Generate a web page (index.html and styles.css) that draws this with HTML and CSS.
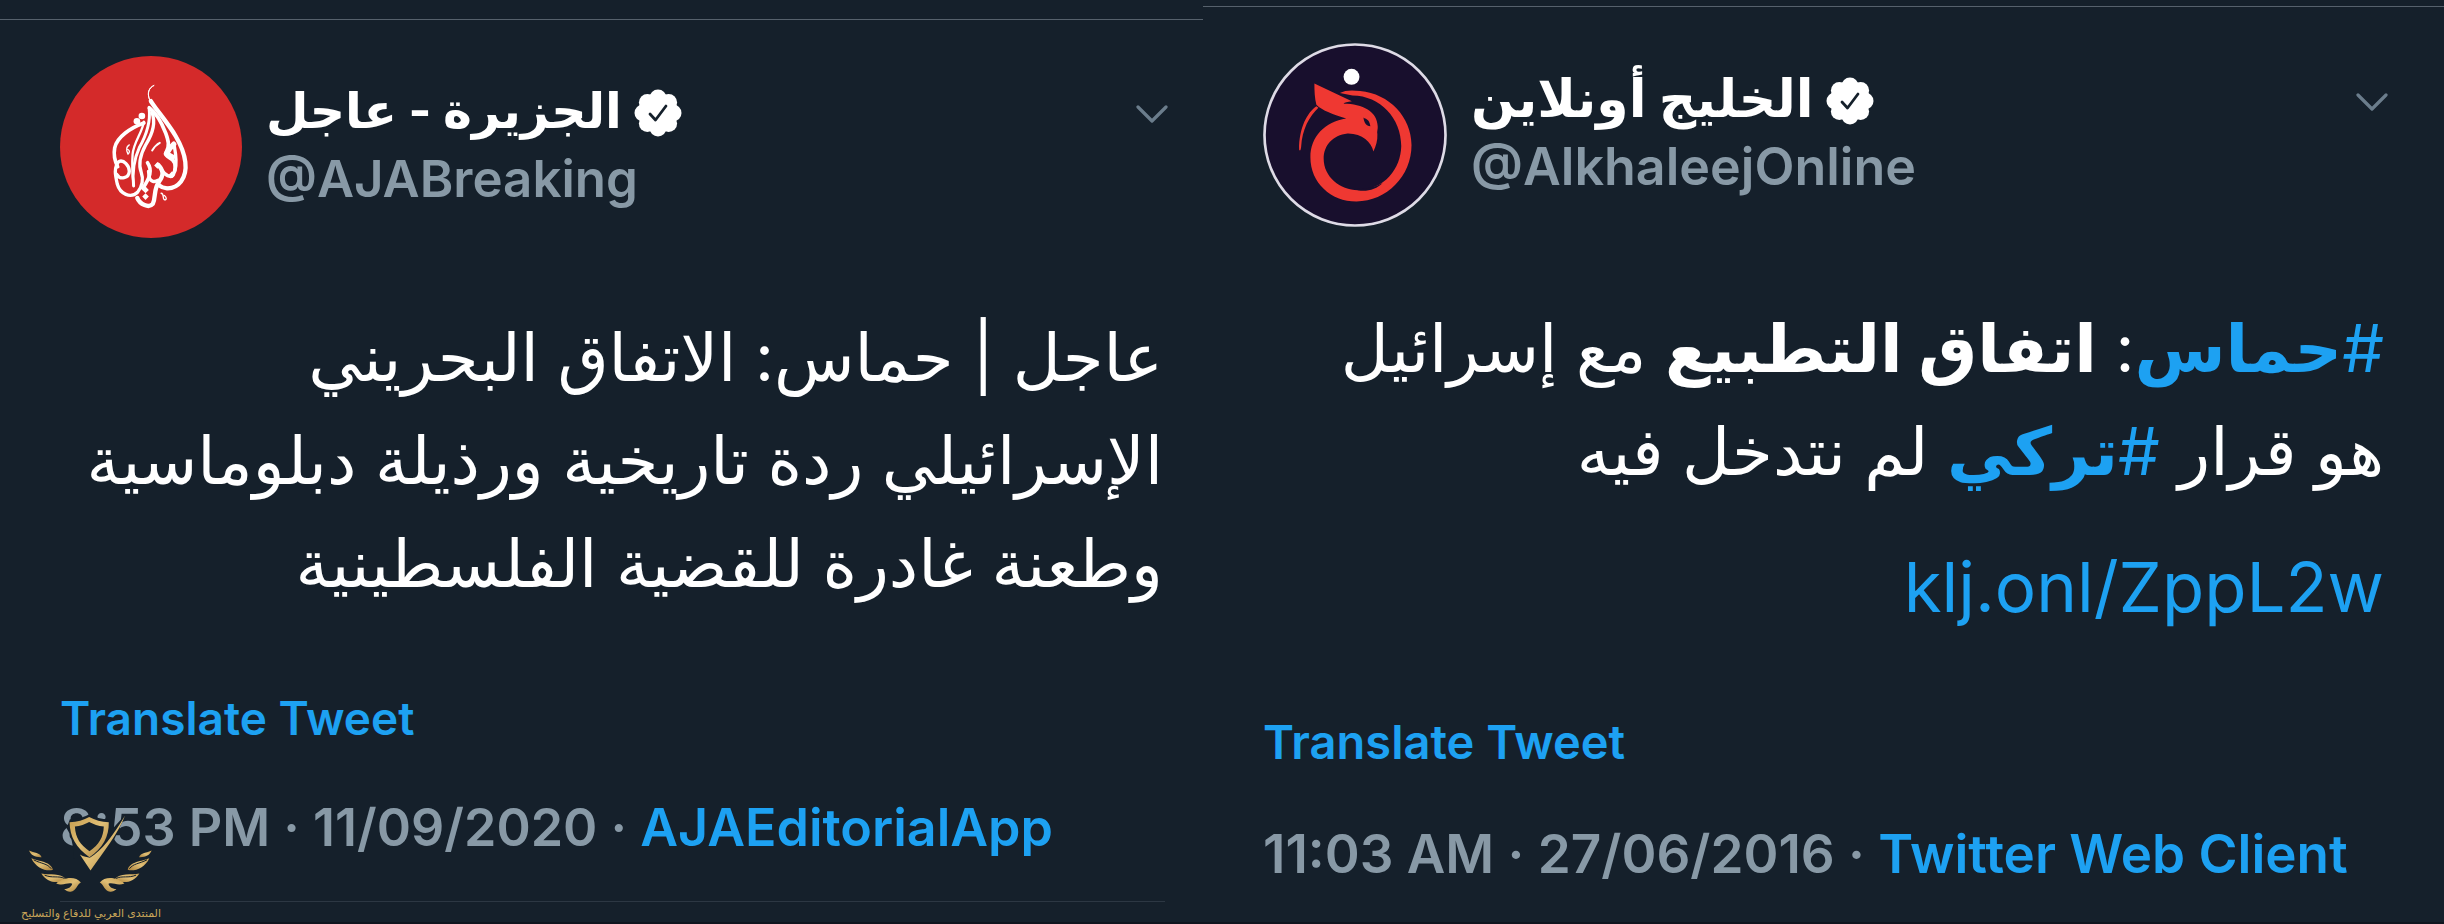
FILE: index.html
```html
<!DOCTYPE html>
<html lang="en">
<head>
<meta charset="utf-8">
<title>Tweets</title>
<link rel="stylesheet" href="styles.css">
</head>
<body>
<svg class="defs" aria-hidden="true">
  <symbol id="badge" viewBox="0 0 48 48">
    <g fill="#fff"><circle cx="24" cy="24" r="18"/><circle cx="24" cy="9" r="8.500"/><circle cx="34.600" cy="13.400" r="8.500"/><circle cx="39" cy="24" r="8.500"/><circle cx="34.600" cy="34.600" r="8.500"/><circle cx="24" cy="39" r="8.500"/><circle cx="13.400" cy="34.600" r="8.500"/><circle cx="9" cy="24" r="8.500"/><circle cx="13.400" cy="13.400" r="8.500"/></g>
    <path d="M16 25l5.500 6L32 17" fill="none" stroke="#15202b" stroke-width="2.800" stroke-linecap="round" stroke-linejoin="round"/>
  </symbol>
  <symbol id="chevron" viewBox="0 0 32 18">
    <path d="M2 2l14 14L30 2" fill="none" stroke="#6b7d8c" stroke-width="3.200" stroke-linecap="round" stroke-linejoin="round"/>
  </symbol>
</svg>
<main class="tweets">
  <article class="tweet tweet-left">
    <header class="head">
      <svg class="avatar" viewBox="57 45 549 549" role="img" aria-label="Al Jazeera">
        <circle cx="331.500" cy="319.500" r="274.500" fill="#d42a2a"/>
        <g fill="none" stroke="#fff" stroke-linecap="round" stroke-linejoin="round">
          <path d="M340 134C325 140 319 156 327 176C332 190 341 201 353 215L327 176C320 158 324 142 340 134Z" fill="#fff" stroke-width="3"/>
          <path d="M331 181C354 220 427 291 435 365C441 415 413 445 380 444C371 443 362 440 356 435" stroke-width="13"/>
          <path d="M326 201C350 218 364 247 376 278C384 300 388 316 378 334C371 345 384 349 396 358C408 369 406 394 397 405C390 412 374 405 365 391" stroke-width="11"/>
          <path d="M400 311C392 318 385 326 378 340L396 350" stroke-width="16"/>
          <path d="M402 318C408 349 409 372 404 390" stroke-width="10"/>
          <path d="M326 204C331 245 316 286 296 322C279 359 275 400 279 437" stroke-width="9"/>
          <path d="M335 217C347 250 335 282 316 312C298 345 293 372 302 396C309 415 306 439 291 456C270 476 238 461 230 432C224 406 218 381 235 363C250 357 266 377 266 393C265 414 238 420 228 402" stroke-width="10"/>
          <path d="M310 247C271 261 229 289 222 322C217 348 225 367 231 379" stroke-width="11"/>
          <path d="M310 243C305 278 279 303 276 342C273 382 277 418 279 434" stroke-width="7"/>
          <path d="M321 367C336 389 329 411 307 444" stroke-width="11"/>
          <path d="M353 373C371 392 369 405 356 424C338 448 347 470 337 491C325 505 298 493 290 473" stroke-width="13"/>
          <path d="M324 393L326 411C331 425 342 426 353 420" stroke-width="10"/>
          <path d="M335 330C341 320 348 312 358 307" stroke-width="6"/>
          <path d="M266 313C256 319 257 331 262 341C268 336 268 330 262 327M362 459C372 460 366 475 371 478C380 481 379 471 372 466" stroke-width="4"/>
        </g>
        <g fill="#fff"><circle cx="289" cy="242" r="10"/><circle cx="304" cy="226" r="10"/><path d="M351 365l10 10-10 10-10-10zM395 393l10 10-10 10-10-10zM315 439l10 10-10 10-10-10zM315 459l10 10-10 10-10-10z"/></g>
      </svg>
      <div class="who">
        <div class="name"><bdi class="name-text" lang="ar">الجزيرة - عاجل</bdi><svg class="badge" role="img" aria-label="Verified"><use href="#badge"/></svg></div>
        <a class="handle" href="#">@AJABreaking</a>
      </div>
      <button class="more" aria-label="More"><svg class="chevron"><use href="#chevron"/></svg></button>
    </header>
    <p class="body" dir="rtl" lang="ar"><span class="line">عاجل | حماس: الاتفاق البحريني</span> <span class="line">الإسرائيلي ردة تاريخية ورذيلة دبلوماسية</span> <span class="line">وطعنة غادرة للقضية الفلسطينية</span></p>
    <button class="translate">Translate Tweet</button>
    <p class="meta">8:53 PM · 11/09/2020 · <a href="#">AJAEditorialApp</a></p>
  </article>
  <article class="tweet tweet-right">
    <header class="head">
      <svg class="avatar" viewBox="39 39 555 555" role="img" aria-label="Al Khaleej Online">
        <circle cx="316.500" cy="316.500" r="273" fill="#180f2d" stroke="#dedbe6" stroke-width="8"/>
        <circle cx="306" cy="141" r="24" fill="#fff"/>
        <g fill="#ef3832">
          <path d="M194 161L307 215Q287 217 282 222C340 222 384 246 385 290C386 298 382 306 384 314C385 333 380 349 372 366C366 338 337 311 294 312C249 317 222 348 222 388C222 443 272 482 325 483C405 483 455 418 456 350C456 265 393 198 309 197L271 190C286 181 309 181 332 184C420 192 487 263 487 347C487 441 412 517 321 517C243 517 182 459 182 384C182 322 226 276 290 267C251 254 218 243 200 225C195 206 194 183 194 161Z"/>
          <path d="M200 230C173 248 147 296 148 361C151 367 153 361 154 353C157 298 179 260 206 234Z"/>
        </g>
        <path d="M342 264C349 270 359 267 363 290C350 290 344 280 342 264Z" fill="#180f2d"/>
        <path d="M325 479C350 480 379 472 400 461C382 480 350 489 325 483Z" fill="#180f2d"/>
      </svg>
      <div class="who">
        <div class="name"><bdi class="name-text" lang="ar">الخليج أونلاين</bdi><svg class="badge" role="img" aria-label="Verified"><use href="#badge"/></svg></div>
        <a class="handle" href="#">@AlkhaleejOnline</a>
      </div>
      <button class="more" aria-label="More"><svg class="chevron"><use href="#chevron"/></svg></button>
    </header>
    <p class="body" dir="rtl" lang="ar"><span class="line"><a href="#">#<b>حماس</b></a>: <b>اتفاق التطبيع</b> مع إسرائيل</span> <span class="line">هو قرار <a href="#">#<b>تركي</b></a> لم نتدخل فيه</span> <a class="link" href="#" dir="ltr">klj.onl/ZppL2w</a></p>
    <button class="translate">Translate Tweet</button>
    <p class="meta">11:03 AM · 27/06/2016 · <a href="#">Twitter Web Client</a></p>
  </article>
</main>
<aside class="watermark">
  <svg class="emblem" viewBox="75 95 385 245" aria-hidden="true">
    <defs><linearGradient id="gold" x1="0" y1="0" x2="1" y2="1"><stop offset="0" stop-color="#c79e50"/><stop offset=".5" stop-color="#e0bf76"/><stop offset="1" stop-color="#a87e38"/></linearGradient></defs>
    <path d="M194 140L204 113C230 113 250 105 263 97C280 108 302 114 328 113L325 150L372 98L330 190L268 280L215 230C215 190 208 160 194 140Z" fill="#15202b"/>
    <g fill="url(#gold)">
      <path fill-rule="evenodd" d="M203 122C226 121 246 115 262 106C279 115 299 121 321 122C322 166 303 200 263 227C222 198 204 166 203 122ZM219 135C221 170 236 191 263 209C291 190 305 168 306 135C289 133 275 128 262 121C250 128 235 133 219 135Z"/>
      <path d="M370 102C349 157 307 209 266 267L234 219C246 226 256 227 264 229C300 208 333 164 370 102Z"/>
      <g id="wing">
        <path d="M81 207C96 215 114 213 119 227C101 228 87 222 81 207Z"/>
        <path d="M88 230C110 240 147 239 153 265C134 271 102 260 88 230Z"/>
        <path d="M118 276C142 281 177 274 191 292C173 309 135 305 118 276Z"/>
        <path d="M163 306C180 290 219 280 237 303C224 309 224 329 206 331C201 332 191 328 187 323C201 323 209 315 211 307C198 301 184 315 163 306Z"/>
      </g>
      <use href="#wing" transform="matrix(-1 0 0 1 531 0)"/>
    </g>
    <path d="M95 235C120 248 135 245 148 262M128 281C150 291 170 282 188 291M436 235C411 248 396 245 383 262M403 281C381 291 361 282 343 291" fill="none" stroke="#15202b" stroke-width="3"/>
  </svg>
  <span class="watermark-text" lang="ar" dir="rtl">المنتدى العربي للدفاع والتسليح</span>
</aside>
</body>
</html>
```
FILE: styles.css
```css
* { box-sizing: border-box; }
body {
  margin: 0;
  min-height: 100vh;
  background: #15202b;
  color: #fff;
  font-family: Inter, "DejaVu Sans", sans-serif;
  position: relative;
}
.defs { position: absolute; width: 0; height: 0; }
a { color: #1da1f2; text-decoration: none; }
button { border: 0; padding: 0; background: none; font: inherit; color: inherit; cursor: pointer; }
.tweets {
  display: grid;
  grid-template-columns: 1203fr 1241fr;
  min-height: 100vh;
  border-bottom: 2px solid #10151f;
}
.tweet { display: flex; flex-direction: column; align-items: stretch; }
.tweet::before { content: ""; display: block; height: 1px; background: #56616c; }
.tweet-left { padding-top: 19px; }
.tweet-right { padding-top: 6px; }
.tweet > * { margin-left: 60px; margin-right: 40px; }
.tweet-right > * { margin-right: 60px; }
.head { display: flex; align-items: flex-start; margin-top: 35px; margin-right: 35px; }
.tweet-right .head { margin-top: 36px; margin-right: 56px; }
.avatar { width: 184px; height: 184px; flex: none; margin-right: 24px; }
.tweet-left .avatar { width: 182px; }
.who { display: flex; flex-direction: column; flex: 1; padding-top: 23px; }
.name { display: flex; align-items: center; gap: 12px; height: 70px; font-weight: 700; font-size: 49px; line-height: 60px; white-space: nowrap; }
.tweet-right .name { font-size: 52px; }
.name-text { padding-bottom: 4px; }
.badge { width: 48px; height: 48px; }
.handle { color: #8899a6; font-size: 51px; font-weight: 600; line-height: 62px; }
.tweet-right .handle { font-size: 52px; }
.more { margin-top: 50px; display: flex; }
.chevron { width: 32px; height: 18px; }
.body { margin-top: 67px; margin-bottom: 0; font-size: 66px; line-height: 103px; white-space: nowrap; }
.tweet-right .body { margin-top: 70px; }
.line { display: block; }
.link { display: block; text-align: right; font-size: 69px; line-height: 136px; padding-top: 16px; }
.translate { align-self: flex-start; color: #1da1f2; font-size: 46px; font-weight: 600; line-height: 60px; margin-top: 73px; }
.tweet-right .translate { margin-top: 57px; font-size: 47px; }
.meta { margin-top: 50px; margin-bottom: 0; color: #8899a6; font-size: 52px; font-weight: 600; line-height: 60px; white-space: nowrap; }
.tweet-right .meta { margin-top: 52px; font-size: 53px; }
.tweet-left::after { content: ""; display: block; height: 1px; background: #2c3743; margin: 43px 38px 0 60px; }
.tweet::before { margin: 0; }
.watermark { position: absolute; left: 24px; bottom: 3px; width: 134px; display: flex; flex-direction: column; align-items: center; gap: 10px; }
.emblem { width: 128px; height: 82px; }
.watermark-text { color: #c9a659; font-size: 11px; line-height: 16px; white-space: nowrap; }
```
